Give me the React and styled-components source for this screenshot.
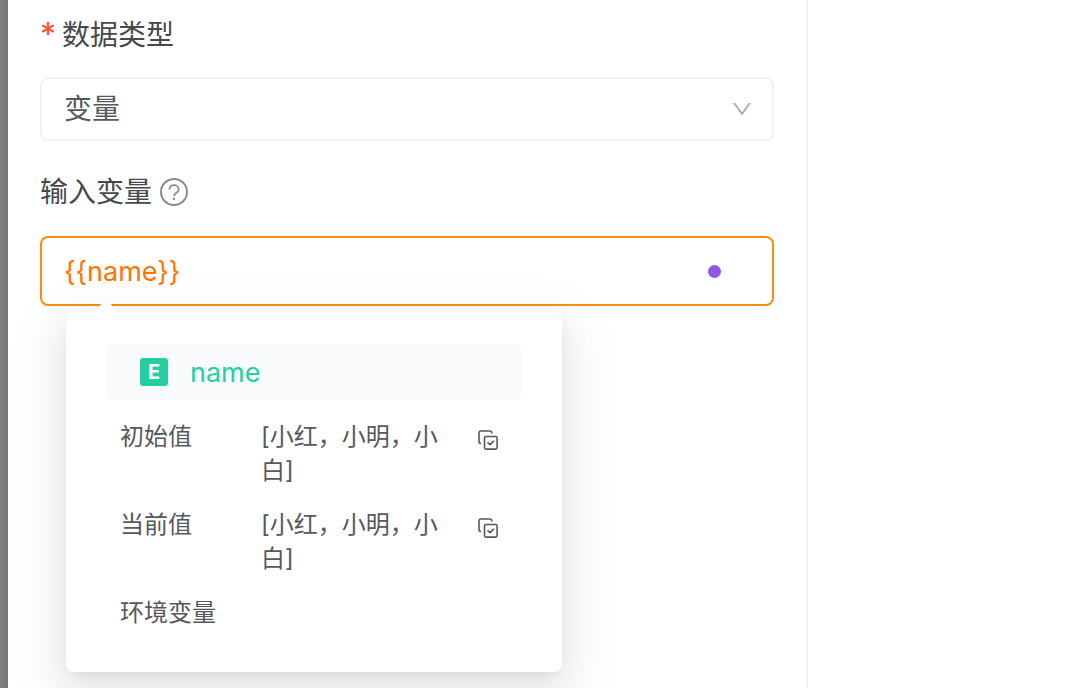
import { useState } from "react"
import styled, { createGlobalStyle } from "styled-components"

const variable = {
  name: "name",
  scope: "环境变量",
  values: [
    { label: "初始值", value: "[小红，小明，小白]" },
    { label: "当前值", value: "[小红，小明，小白]" },
  ],
}

const ArrowDownIcon = () => (
  <svg viewBox="0 0 1024 1024" width="24" height="24" fill="currentColor" aria-hidden="true">
    <path d="M884 256h-75c-5.1 0-9.9 2.5-12.9 6.6L512 654.2 227.9 262.6c-3-4.1-7.8-6.6-12.9-6.6h-75c-6.5 0-10.3 7.4-6.5 12.7l352.6 486.1c12.8 17.6 39 17.6 51.7 0l352.6-486.1c3.9-5.3.1-12.7-6.4-12.7z" />
  </svg>
)

const HelpIcon = () => (
  <svg viewBox="0 0 28 28" width="28" height="28" fill="none" aria-hidden="true">
    <circle cx="14" cy="14" r="13" stroke="currentColor" strokeWidth="2" />
    <path
      d="M9.4 11.6c0-2.600 1.900-4.400 4.600-4.400s4.700 1.700 4.700 4.200c0 3.300-4.700 3.300-4.700 6.800"
      stroke="currentColor"
      strokeWidth="1.8"
    />
    <circle cx="14" cy="21" r="1.2" fill="currentColor" />
  </svg>
)

const CopyIcon = () => (
  <svg
    viewBox="0 0 20 20"
    width="20"
    height="20"
    fill="none"
    stroke="currentColor"
    strokeWidth="1.6"
    strokeLinecap="round"
    strokeLinejoin="round"
    aria-hidden="true"
  >
    <path d="M13.7 2.9v-.1c0-1-.8-1.8-1.8-1.8H2.8C1.8 1 1 1.8 1 2.800v9c0 .8.5 1.500 1.400 1.700" />
    <rect x="6.500" y="6.500" width="12.600" height="12.600" rx="1.600" />
    <path d="M10 12.800l2.100 1.800 3.400-3.400" />
  </svg>
)

const VariablePopover = () => (
  <PopoverSt role="dialog" aria-label={variable.name}>
    <ArrowSt viewBox="0 0 32 14" aria-hidden="true">
      <path d="M0 14c2 0 3.5-.8 5-2.2L14.300 2c1-1.200 2.400-1.200 3.400 0L27 11.8c1.5 1.4 3 2.2 5 2.2z" fill="#fff" />
    </ArrowSt>
    <NameRowSt>
      <BadgeSt>E</BadgeSt>
      <span>{variable.name}</span>
    </NameRowSt>
    <DetailsSt>
      {variable.values.map(({ label, value }) => (
        <DetailRowSt key={label}>
          <dt>{label}</dt>
          <dd>{value}</dd>
          <CopyButtonSt
            type="button"
            aria-label={`复制${label}`}
            onClick={() => navigator.clipboard?.writeText(value)}
          >
            <CopyIcon />
          </CopyButtonSt>
        </DetailRowSt>
      ))}
      <DetailRowSt>
        <dt>{variable.scope}</dt>
      </DetailRowSt>
    </DetailsSt>
  </PopoverSt>
)

const App = () => {
  const [type, setType] = useState("variable")
  const [input, setInput] = useState("{{name}}")

  return (
    <PageSt>
      <GlobalStyle />
      <MaskSt />
      <FormSt onSubmit={event => event.preventDefault()}>
        <LabelSt htmlFor="data-type">
          <RequiredSt>*</RequiredSt>数据类型
        </LabelSt>
        <SelectWrapSt>
          <SelectSt
            id="data-type"
            value={type}
            onChange={event => setType(event.target.value)}
          >
            <option value="variable">变量</option>
          </SelectSt>
          <ArrowDownIcon />
        </SelectWrapSt>
        <LabelRowSt>
          <LabelSt htmlFor="input-variable">输入变量</LabelSt>
          <HelpButtonSt type="button" aria-label="帮助">
            <HelpIcon />
          </HelpButtonSt>
        </LabelRowSt>
        <InputWrapSt>
          <InputSt
            id="input-variable"
            type="text"
            value={input}
            spellCheck={false}
            autoComplete="off"
            onChange={event => setInput(event.target.value)}
          />
          <DotSt />
          <VariablePopover />
        </InputWrapSt>
      </FormSt>
      <AsideSt />
    </PageSt>
  )
}

const GlobalStyle = createGlobalStyle`
  * {
    box-sizing: border-box;
  }
  body {
    margin: 0;
    overflow: hidden;
    background: #fff;
    color: #56585c;
    font-family: Inter, "Noto Sans CJK SC", sans-serif;
    font-size: 28px;
  }
  button, input, select {
    padding: 0;
    border: none;
    outline: none;
    background: none;
    color: inherit;
    font: inherit;
  }
  button {
    display: flex;
    cursor: pointer;
  }
`
const PageSt = styled.div`
  display: flex;
  min-height: 100vh;
`
const MaskSt = styled.div`
  flex: 0 0 8px;
  background: linear-gradient(to right, #828282, #777);
`
const FormSt = styled.form`
  flex: 1;
  padding: 15px 32px 0;
  border-right: 2px solid #f2f2f3;
`
const AsideSt = styled.aside`
  flex: 0 0 262px;
`
const LabelSt = styled.label`
  display: flex;
  align-items: center;
  height: 40px;
  color: #46484b;
  line-height: 40px;
`
const RequiredSt = styled.span`
  width: 22px;
  color: #ff5031;
  font-size: 32px;
`
const LabelRowSt = styled.div`
  display: flex;
  align-items: center;
  gap: 8px;
  margin: 31px 0 24px;
`
const HelpButtonSt = styled.button`
  color: #8c8c8c;
`
const SelectWrapSt = styled.div`
  display: grid;
  align-items: center;
  margin-top: 22px;
  > * {
    grid-area: 1 / 1;
  }
  svg {
    justify-self: end;
    margin-right: 20px;
    color: #adadad;
    pointer-events: none;
  }
`
const SelectSt = styled.select`
  width: 100%;
  height: 64px;
  padding: 0 56px 0 22px;
  border: 2px solid #f2f2f3;
  border-radius: 8px;
  appearance: none;
`
const InputWrapSt = styled.div`
  position: relative;
  display: flex;
  align-items: center;
  height: 70px;
  padding: 0 51px 0 22px;
  border: 2px solid #fa8c16;
  border-radius: 8px;
`
const InputSt = styled.input`
  flex: 1;
  min-width: 0;
  height: 100%;
  color: #ff7500;
  font-size: 27px;
`
const DotSt = styled.span`
  width: 13px;
  height: 13px;
  border-radius: 50%;
  background: #8f57e9;
`
const PopoverSt = styled.div`
  position: absolute;
  top: 74px;
  left: 24px;
  width: 496px;
  padding: 32px 40px 42px;
  border-radius: 8px;
  background: #fff;
  box-shadow: 0 6px 12px -8px rgba(0, 0, 0, 0.12),
    0 12px 32px rgba(0, 0, 0, 0.08), 0 18px 56px 16px rgba(0, 0, 0, 0.05);
`
const ArrowSt = styled.svg`
  position: absolute;
  top: -13px;
  left: 24px;
  width: 32px;
  height: 14px;
`
const NameRowSt = styled.div`
  display: flex;
  align-items: center;
  gap: 22px;
  height: 56px;
  padding: 0 34px;
  border-radius: 8px;
  background: #f8fafc;
  color: #26cea4;
  font-size: 27px;
`
const BadgeSt = styled.span`
  width: 28px;
  height: 28px;
  border-radius: 3px;
  background: #26cea4;
  color: #fff;
  font-size: 20px;
  font-weight: 700;
  line-height: 28px;
  text-align: center;
`
const DetailsSt = styled.dl`
  display: grid;
  gap: 20px;
  margin: 20px 0 0;
  padding: 0 24px 0 14px;
  font-size: 24px;
  line-height: 34px;
`
const DetailRowSt = styled.div`
  display: grid;
  grid-template-columns: 141px 1fr 20px;
  dt {
    white-space: nowrap;
  }
  dd {
    margin: 0;
    padding-right: 28px;
  }
`
const CopyButtonSt = styled.button`
  align-self: start;
  margin-top: 10px;
`

export default App
